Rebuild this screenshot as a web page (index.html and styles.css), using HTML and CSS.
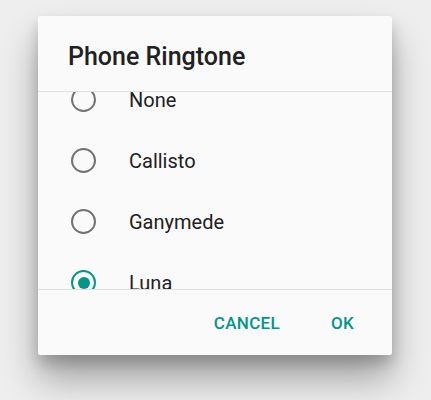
FILE: index.html
```html
<!DOCTYPE html>
<html>
<head>
<meta charset="utf-8">
<link rel="stylesheet" href="styles.css">
</head>
<body>
<div class="dialog">
  <div class="title">Phone Ringtone</div>
  <div class="list">
    <div class="list-inner">
      <div class="row"><span class="radio"></span><span class="label">None</span></div>
      <div class="row"><span class="radio"></span><span class="label">Callisto</span></div>
      <div class="row"><span class="radio"></span><span class="label">Ganymede</span></div>
      <div class="row"><span class="radio checked"></span><span class="label">Luna</span></div>
    </div>
  </div>
  <div class="actions">
    <span class="btn">CANCEL</span>
    <span class="btn">OK</span>
  </div>
</div>
</body>
</html>
```

FILE: styles.css
```css
html, body {
  margin: 0;
  padding: 0;
}
body {
  background: #eeeeee;
  width: 431px;
  height: 400px;
  overflow: hidden;
  font-family: Roboto, "Liberation Sans", sans-serif;
  padding-top: 16px;
  box-sizing: border-box;
}
.dialog {
  margin-left: 38px;
  width: 354px;
  height: 339px;
  background: #fafafa;
  border-radius: 2px;
  box-shadow: 0 24px 36px rgba(0,0,0,0.32), 0 8px 14px rgba(0,0,0,0.18);
  display: flex;
  flex-direction: column;
  overflow: hidden;
}
.title {
  height: 76px;
  box-sizing: border-box;
  padding: 26px 0 0 30px;
  font-size: 25px;
  font-weight: 500;
  color: #212121;
  line-height: 30px;
  border-bottom: 1px solid #e0e0e0;
  flex: none;
}
.list {
  height: 197px;
  overflow: hidden;
  border-bottom: 1px solid #e0e0e0;
  flex: none;
}
.list-inner {
  margin-top: -23px;
}
.row {
  height: 61px;
  display: flex;
  align-items: center;
}
.radio {
  width: 25px;
  height: 25px;
  box-sizing: border-box;
  border: 2.5px solid #737373;
  border-radius: 50%;
  margin-left: 33px;
  margin-right: 33px;
  display: flex;
  align-items: center;
  justify-content: center;
  flex: none;
}
.radio.checked {
  border-color: #009688;
}
.radio.checked::after {
  content: "";
  width: 12px;
  height: 12px;
  border-radius: 50%;
  background: #009688;
}
.label {
  font-size: 20px;
  color: #212121;
}
.actions {
  flex: 1;
  display: flex;
  justify-content: flex-end;
  align-items: center;
  padding-right: 38px;
  gap: 51px;
}
.btn {
  color: #009688;
  font-size: 17px;
  font-weight: 500;
  letter-spacing: 0.3px;
}
```
